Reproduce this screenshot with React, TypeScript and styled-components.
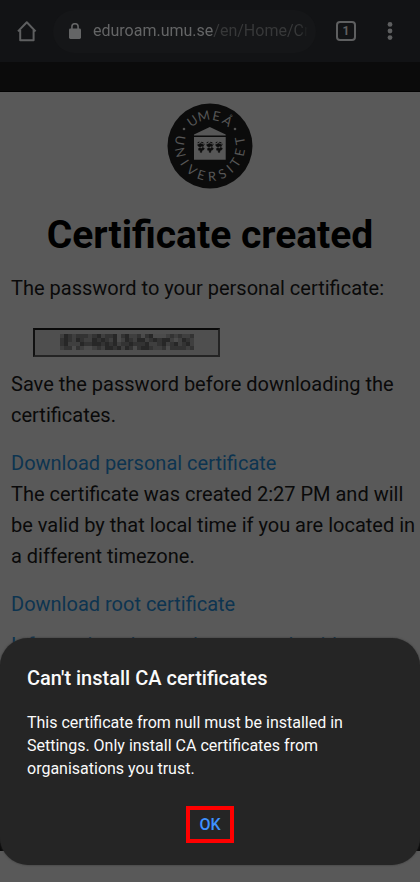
import React from "react";
import styled, { createGlobalStyle } from "styled-components";

const GlobalStyle = createGlobalStyle`
  *, *::before, *::after { box-sizing: border-box; }
  body { margin: 0; background: #595959; font-family: Roboto, "Liberation Sans", sans-serif; }
  h1, h2, p { margin: 0; }
`;

const Screen = styled.div`
  position: relative;
  min-height: 100vh;
  overflow: hidden;
  display: flex;
  flex-direction: column;
  padding-bottom: 31px;
  background: #595959;
  color: #0a0a0a;
`;

const BrowserBar = styled.header`
  display: flex;
  align-items: center;
  gap: 14px;
  flex: none;
  height: 62px;
  padding: 0 18px 0 15px;
  background: #121315;
  color: #5e5f60;
`;

const IconButton = styled.button`
  display: flex;
  align-items: center;
  justify-content: center;
  flex: none;
  width: 24px;
  height: 24px;
  padding: 0;
  border: 0;
  background: none;
  color: inherit;
`;

const AddressBar = styled.div`
  display: flex;
  align-items: center;
  gap: 12px;
  flex: 1;
  min-width: 0;
  height: 43px;
  padding: 0 8px 0 16px;
  border-radius: 22px;
  background: #151618;
`;

const Url = styled.span`
  flex: 1;
  min-width: 0;
  overflow: hidden;
  white-space: nowrap;
  font-size: 16px;
  line-height: 20px;
  color: #373839;
  mask-image: linear-gradient(to right, #000 96%, transparent);
`;

const Host = styled.span`
  color: #646566;
`;

const BarActions = styled.div`
  display: flex;
  gap: 20px;
  margin-left: 4px;
`;

const SiteBand = styled.div`
  flex: none;
  height: 30px;
  background: #0b0b0b;
  border-bottom: 1px solid #030303;
`;

const Page = styled.main`
  flex: none;
  display: flex;
  flex-direction: column;
  padding: 11px 0 24px;
`;

const Crest = styled.svg`
  align-self: center;
  width: 86px;
  height: 86px;
`;

const Heading = styled.h1`
  margin: 22px 0 14px;
  text-align: center;
  font-size: 39px;
  line-height: 48px;
  font-weight: 700;
  color: #000;
`;

const Copy = styled.div`
  display: flex;
  flex-direction: column;
  align-items: flex-start;
  padding-left: 11px;
  font-size: 20px;
  line-height: 31px;
`;

const Paragraph = styled.p`
  margin-bottom: 17px;
`;

const PasswordField = styled.div`
  width: 187px;
  height: 29px;
  margin: 7px 0 12px 22px;
  padding: 4px 24px 0 25px;
  border: 2px solid #242424;
  border-top-color: #0a0a0a;
  border-left-color: #111;
  background: #4f4f4f;

  svg { display: block; width: 100%; height: 16px; }
`;

const PageLink = styled.a<{ $spaced?: boolean }>`
  margin-bottom: ${(p) => (p.$spaced ? "10px" : "0")};
  color: #0d3450;
  text-decoration: none;
`;

const Footer = styled.footer`
  flex: 1;
  background: #0b0b0b;
`;

const Dialog = styled.section`
  position: absolute;
  left: 0;
  right: 0;
  bottom: 17px;
  display: flex;
  flex-direction: column;
  padding: 26px 27px 22px;
  border-radius: 28px;
  background: #252525;
  color: #fafafa;
  box-shadow: 0 0 2px #333;
`;

const DialogTitle = styled.h2`
  margin-bottom: 19px;
  font-size: 20px;
  line-height: 28px;
  font-weight: 500;
`;

const DialogText = styled.p`
  font-size: 16px;
  line-height: 23px;
`;

const OkButton = styled.button`
  align-self: center;
  width: 48px;
  height: 37px;
  margin-top: 26px;
  padding: 0;
  border: 4px solid #f00;
  background: none;
  color: #3e91ff;
  font: 500 16px/20px Roboto, "Liberation Sans", sans-serif;
`;

const HomeIcon = () => (
  <svg width="24" height="24" viewBox="0 0 24 24" fill="none" stroke="currentColor" strokeWidth="2" aria-hidden="true">
    <path d="M3 12.4 11.8 3.2l8.8 9.2M5.2 11v10.2h13.4V11" strokeLinejoin="round" />
  </svg>
);

const LockIcon = () => (
  <svg width="12" height="16" viewBox="0 0 12 16" aria-hidden="true">
    <rect y="5.5" width="12" height="10.5" rx="1.4" fill="#646566" />
    <path d="M2.9 6V3.8a3.1 3.1 0 0 1 6.2 0V6" fill="none" stroke="#646566" strokeWidth="1.6" />
  </svg>
);

const MoreIcon = () => (
  <svg width="24" height="24" viewBox="0 0 24 24" fill="currentColor" aria-hidden="true">
    <circle cx="12" cy="5.4" r="2.4" />
    <circle cx="12" cy="12" r="2.4" />
    <circle cx="12" cy="18.6" r="2.4" />
  </svg>
);

const TabCount = styled.span`
  display: flex;
  align-items: center;
  justify-content: center;
  width: 20px;
  height: 20px;
  border: 2px solid currentColor;
  border-radius: 4px;
  font: 700 12px/16px Roboto, sans-serif;
`;

const Reindeer = ({ x }: { x: number }) => (
  <g transform={`translate(${x} 38.6)`} fill="#0d0d0d" stroke="#0d0d0d">
    <path d="M.6 1.2 2.4.4M3 2.2 4.6.6 6.6 1.4M6.4 3.4 7.6 2.6" fill="none" strokeWidth="1" />
    <path d="M.4 3.2 2 2.4 5.2 2.2 6.8 3.6 6.2 5 4.2 4.6 3.4 5.6 1.6 5Z" strokeWidth=".4" />
    <path d="M1.4 7 3 6.2 4.2 7 5.6 5.6 7.4 6.6 6.8 8.2 5.2 8.8 4.6 11 3 10.6 3.4 8.8 1.6 8.6Z" strokeWidth=".4" />
  </g>
);

const topLetters: [string, number][] = [["U", -35], ["M", -12], ["E", 12], ["Å", 35]];
const bottomLetters: [string, number][] = [
  ["U", 101], ["N", 78], ["I", 57], ["V", 37], ["E", 17], ["R", -4],
  ["S", -24], ["I", -41], ["T", -57], ["E", -78], ["T", -100],
];

const UniversityCrest = () => (
  <Crest viewBox="0 0 86 86" role="img" aria-label="Umeå Universitet">
    <circle cx="43" cy="43" r="42.5" fill="#0b0b0b" />
    <g fill="#565656" fontFamily="Lato, sans-serif" fontSize="13" textAnchor="middle">
      {topLetters.map(([letter, angle]) => (
        <text key={angle} x="43" y="17" transform={`rotate(${angle} 43 43)`}>{letter}</text>
      ))}
      {bottomLetters.map(([letter, angle]) => (
        <text key={angle} x="43" y="78" transform={`rotate(${angle} 43 43)`}>{letter}</text>
      ))}
    </g>
    <circle cx="17" cy="26" r="1.3" fill="#505050" />
    <circle cx="68" cy="26" r="1.3" fill="#505050" />
    <path d="M27 31.6 42.8 24l15.9 7.6v1H27ZM27 34h31.7v22.8H27Z" fill="#575757" />
    <Reindeer x={30} />
    <Reindeer x={39} />
    <Reindeer x={48} />
  </Crest>
);

const mosaic = [
  "132122212312230231120230001212112",
  "232132113232130132133123233101321",
  "231113223323231223222311231231231",
  "122021001213323132023321120222212",
];
const shades = ["#4b4b4b", "#3f3f3f", "#333333", "#272727"];

const Mosaic = () => (
  <svg viewBox="0 0 33 4" preserveAspectRatio="none" shapeRendering="crispEdges">
    {mosaic.flatMap((row, y) =>
      row.split("").map((v, x) => (
        <rect key={`${x}-${y}`} x={x} y={y} width="1" height="1" fill={shades[Number(v)]} />
      ))
    )}
  </svg>
);

export default function App() {
  return (
    <Screen>
      <GlobalStyle />
      <BrowserBar>
        <IconButton aria-label="Home"><HomeIcon /></IconButton>
        <AddressBar>
          <LockIcon />
          <Url><Host>eduroam.umu.se</Host>/en/Home/Cr</Url>
        </AddressBar>
        <BarActions>
          <IconButton aria-label="Tabs"><TabCount>1</TabCount></IconButton>
          <IconButton aria-label="More options"><MoreIcon /></IconButton>
        </BarActions>
      </BrowserBar>
      <SiteBand />
      <Page>
        <UniversityCrest />
        <Heading>Certificate created</Heading>
        <Copy>
          <Paragraph>The password to your personal certificate:</Paragraph>
          <PasswordField role="img" aria-label="Hidden password"><Mosaic /></PasswordField>
          <Paragraph>Save the password before downloading the certificates.</Paragraph>
          <PageLink href="#personal">Download personal certificate</PageLink>
          <Paragraph>The certificate was created 2:27 PM and will be valid by that local time if you are located in a different timezone.</Paragraph>
          <PageLink href="#root" $spaced>Download root certificate</PageLink>
          <PageLink href="#info">Information about eduroam and guides</PageLink>
        </Copy>
      </Page>
      <Footer />
      <Dialog role="dialog" aria-labelledby="dialog-title">
        <DialogTitle id="dialog-title">Can't install CA certificates</DialogTitle>
        <DialogText>This certificate from null must be installed in Settings. Only install CA certificates from organisations you trust.</DialogText>
        <OkButton>OK</OkButton>
      </Dialog>
    </Screen>
  );
}
